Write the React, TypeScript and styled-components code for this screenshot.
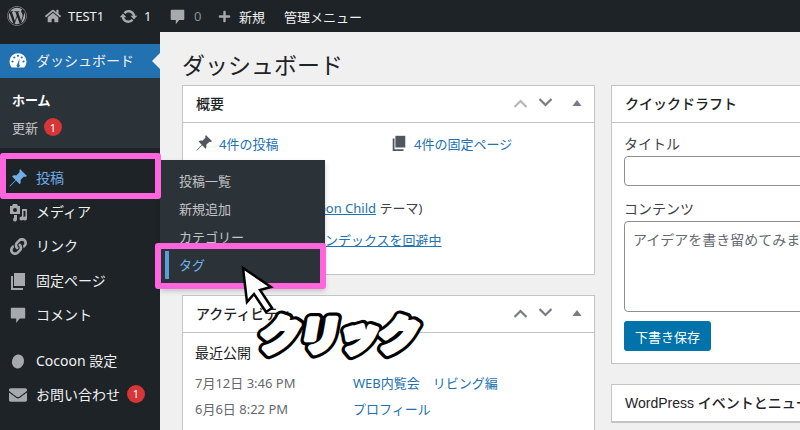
import React from 'react'
import styled, { createGlobalStyle } from 'styled-components'
import { FaWordpress, FaHome, FaPlus, FaLink, FaEnvelope } from 'react-icons/fa'

const Global = createGlobalStyle`
  html, body { margin: 0; padding: 0; background: #f0f0f1; }
  body { font-family: "Noto Sans", "Noto Sans CJK JP", sans-serif; }
  * { box-sizing: border-box; }
`

const Page = styled.div`
  position: relative;
  width: 800px;
  height: 430px;
  overflow: hidden;
`

const TopBar = styled.div`
  height: 32px;
  background: #1d2327;
  display: flex;
  align-items: center;
  color: #f0f0f1;
  font-size: 13px;
`

const BarItem = styled.div<{ $w: number; $gap?: number; $dim?: boolean }>`
  display: flex;
  align-items: center;
  width: ${p => p.$w}px;
  gap: ${p => p.$gap ?? 8}px;
  color: ${p => (p.$dim ? '#8c8f94' : '#f0f0f1')};
  svg { color: #a7aaad; flex: none; }
`

const Body = styled.div`
  display: grid;
  grid-template-columns: 160px 1fr;
  height: 398px;
`

const Sidebar = styled.div`
  background: #1d2327;
  padding-top: 12px;
  color: #f0f0f1;
  font-size: 14px;
`

const MenuItem = styled.div<{ $active?: boolean; $current?: boolean }>`
  position: relative;
  height: 34.4px;
  display: flex;
  align-items: center;
  gap: 8px;
  padding-left: 8px;
  background: ${p => (p.$current ? '#2271b1' : 'transparent')};
  color: ${p => (p.$active ? '#72aee6' : '#f0f0f1')};
  svg { flex: none; color: ${p => (p.$current ? '#fff' : p.$active ? '#72aee6' : '#a7aaad')}; }
`

const IconSlot = styled.span`
  width: 20px;
  height: 20px;
  display: flex;
  align-items: center;
  justify-content: center;
`

const Label = styled.span`
  position: relative;
  top: -1px;
  display: flex;
  align-items: center;
  gap: 7px;
`

const Notch = styled.span`
  position: absolute;
  right: 0;
  top: 9px;
  border: 8px solid transparent;
  border-right-color: #f0f0f1;
  border-left-width: 0;
`

const SubMenu = styled.div`
  background: #2c3338;
  height: 70px;
  padding-top: 7px;
  margin-bottom: 12px;
`

const SubItem = styled.div<{ $bold?: boolean }>`
  height: 28px;
  padding-left: 12px;
  display: flex;
  align-items: center;
  gap: 6px;
  font-size: 13px;
  font-weight: ${p => (p.$bold ? 700 : 400)};
  color: ${p => (p.$bold ? '#fff' : '#c3c4c7')};
`

const Badge = styled.span`
  width: 18px;
  height: 18px;
  border-radius: 50%;
  background: #d63638;
  color: #fff;
  font-size: 11px;
  display: inline-flex;
  align-items: center;
  justify-content: center;
`

const MenuGap = styled.div`
  height: 11px;
`

const Flyout = styled.div`
  position: absolute;
  left: 160px;
  top: 0;
  width: 165px;
  height: 128px;
  padding-top: 6px;
  background: #2c3338;
  box-shadow: 0 3px 5px rgba(0, 0, 0, 0.2);
  z-index: 2;
`

const FlyItem = styled.div<{ $on?: boolean }>`
  height: 28px;
  display: flex;
  align-items: center;
  padding-left: 19px;
  font-size: 13px;
  color: ${p => (p.$on ? '#72aee6' : '#c3c4c7')};
`

const Main = styled.div`
  padding: 20px 0 0 22px;
  overflow: hidden;
`

const Title = styled.h1`
  margin: 0 0 7px;
  font-size: 23px;
  line-height: 26px;
  font-weight: 400;
  color: #1d2327;
  height: 26px;
`

const Columns = styled.div`
  display: grid;
  grid-template-columns: 413px 413px;
  column-gap: 16px;
  align-items: start;
`

const Stack = styled.div`
  display: flex;
  flex-direction: column;
  gap: 20px;
`

const Panel = styled.div<{ $h?: number }>`
  background: #fff;
  border: 1px solid #c3c4c7;
  height: ${p => (p.$h ? `${p.$h}px` : 'auto')};
`

const PanelHead = styled.div`
  height: 37px;
  padding: 0 11px 2px 13px;
  border-bottom: 1px solid #c3c4c7;
  display: flex;
  align-items: center;
  justify-content: space-between;
  font-family: "Liberation Sans", "Noto Sans CJK JP", sans-serif;
  font-size: 14px;
  font-weight: 500;
  color: #1d2327;
  white-space: nowrap;
`

const Handles = styled.div`
  display: flex;
  align-items: center;
  gap: 10px;
`

const ChevronMark = styled.svg<{ $dim?: boolean }>`
  color: ${p => (p.$dim ? '#b5b7ba' : '#787c82')};
`

const Triangle = styled.svg`
  color: #787c82;
  margin-left: 8px;
`

const PanelBody = styled.div`
  padding: 9px 12px;
  font-size: 13px;
  color: #3c434a;
`

const GlanceRow = styled.div`
  display: grid;
  grid-template-columns: 195px 1fr;
  height: 22px;
  align-items: center;
`

const Glance = styled.div`
  display: flex;
  align-items: center;
  gap: 6px;
  color: #2271b1;
  svg { color: #50575e; }
`

const ThemeLine = styled.div`
  margin: 44px 0 0 6px;
  height: 20px;
  white-space: nowrap;
`

const SeoLine = styled.div`
  margin: 12px 0 0 39px;
  height: 20px;
  white-space: nowrap;
`

const Link = styled.a`
  color: #2271b1;
  text-decoration: underline;
`

const SectionLabel = styled.div`
  font-size: 14px;
  color: #1d2327;
  margin: 0 0 7px;
  height: 20px;
`

const ActivityRow = styled.div`
  display: grid;
  grid-template-columns: 158px 1fr;
  height: 26px;
  align-items: center;
`

const Stamp = styled.span`
  color: #646970;
`

const Plain = styled.span`
  color: #2271b1;
  white-space: nowrap;
`

const QuickBody = styled.div`
  padding: 10px 12px;
`

const FieldLabel = styled.div`
  font-size: 14px;
  color: #3c434a;
  height: 23px;
`

const Input = styled.div`
  height: 30px;
  border: 1px solid #8c8f94;
  border-radius: 4px;
  margin-bottom: 12px;
`

const Textarea = styled.div`
  height: 91px;
  border: 1px solid #8c8f94;
  border-radius: 4px;
  padding: 7px 8px;
  font-size: 14px;
  color: #646970;
  white-space: nowrap;
  overflow: hidden;
  margin-bottom: 9px;
`

const SaveButton = styled.div`
  width: 87px;
  height: 30px;
  background: #0073aa;
  border-radius: 3px;
  color: #fff;
  font-size: 13px;
  display: flex;
  align-items: center;
  justify-content: center;
`

const PinkBox = styled.div<{ $x: number; $y: number; $w: number; $h: number }>`
  position: absolute;
  left: ${p => p.$x}px;
  top: ${p => p.$y}px;
  width: ${p => p.$w}px;
  height: ${p => p.$h}px;
  border: 6px solid #ff66dd;
  border-radius: 3px;
  z-index: 3;
`

const ActiveBar = styled.div`
  position: absolute;
  left: 165px;
  top: 251px;
  width: 4px;
  height: 28px;
  background: #5b9dd9;
  z-index: 3;
`

const Cursor = styled.svg`
  position: absolute;
  left: 240px;
  top: 264px;
  z-index: 4;
`

const ClickMark = styled.svg`
  position: absolute;
  left: 245px;
  top: 301px;
  overflow: visible;
  transform: skewX(-10deg);
  z-index: 4;
  text {
    font-family: "Noto Sans CJK JP", sans-serif;
    font-size: 40px;
    font-weight: 900;
    letter-spacing: -0.5px;
    fill: #fff;
  }
`

const Chevron = ({ up, dim }: { up?: boolean; dim?: boolean }) => (
  <ChevronMark $dim={dim} width="15" height="10" viewBox="0 0 15 10">
    <path d={up ? 'M1.500 9l6-6 6 6' : 'M1.500 1l6 6 6-6'} fill="none" stroke="currentColor" strokeWidth="2.200" />
  </ChevronMark>
)

const Handle = ({ dimUp }: { dimUp?: boolean }) => (
  <Handles>
    <Chevron up dim={dimUp} />
    <Chevron />
    <Triangle width="12" height="10" viewBox="0 0 12 10">
      <path d="M6 2l4.500 6h-9z" fill="currentColor" />
    </Triangle>
  </Handles>
)

const SyncIcon = () => (
  <svg width="19" height="19" viewBox="0 0 20 20" fill="currentColor">
    <path d="M10.200 3.280c3.530 0 6.430 2.610 6.920 6h2.080l-3.500 4-3.500-4h2.320c-.450-1.970-2.210-3.450-4.320-3.450-1.450 0-2.730.710-3.540 1.780L4.950 5.660C6.230 4.200 8.110 3.280 10.200 3.280zM9.800 16.720c-3.520 0-6.430-2.610-6.920-6H.8l3.500-4c1.170 1.330 2.330 2.670 3.500 4H5.480c.450 1.970 2.210 3.440 4.320 3.440 1.450 0 2.730-.700 3.540-1.770l1.710 1.950c-1.280 1.460-3.150 2.380-5.250 2.380z" />
  </svg>
)

const GaugeIcon = () => (
  <svg width="20" height="20" viewBox="0 0 20 20">
    <path d="M3.800 16.500A8.500 8.500 0 1 1 16.200 16.500z" fill="currentColor" />
    <g fill="#2271b1">
      <circle cx="4.500" cy="10.500" r="1.100" />
      <circle cx="6.300" cy="6.500" r="1.100" />
      <circle cx="10" cy="4.800" r="1.100" />
      <circle cx="13.700" cy="6.500" r="1.100" />
      <circle cx="15.500" cy="10.500" r="1.100" />
      <path d="M11.500 7.500l-.3 6a1.600 1.600 0 1 1-2 0z" />
    </g>
  </svg>
)

const PinIcon = ({ size = 20 }: { size?: number }) => (
  <svg width={size} height={size} viewBox="0 0 20 20" fill="currentColor">
    <path d="M12 1l7 7-2 1-1-.5-3.500 3.500c.5 2 .2 3.300-.8 4.300L8 12.500 2 18.500l-.5-.5L7.500 12 4 8.300c1-1 2.300-1.300 4.300-.8L11.800 4 11.300 3z" />
  </svg>
)

const MediaIcon = () => (
  <svg width="20" height="20" viewBox="0 0 20 20" fill="currentColor">
    <path d="M2 4h2l1-2h4l1 2h2v8H2z" />
    <circle cx="7" cy="8" r="2" fill="#1d2327" />
    <path d="M14 7h5v9.500a2 2 0 1 1-1.500-1.900V9H15.500v7.500a2 2 0 1 1-1.500-1.900z" />
    <path d="M6 13h3v4.500a2 2 0 1 1-3-1.700z" />
  </svg>
)

const PagesIcon = ({ size = 20 }: { size?: number }) => (
  <svg width={size} height={size} viewBox="0 0 20 20" fill="currentColor">
    <path d="M6 2h11v13H6z" />
    <path d="M3 5h2v12h10v2H3z" />
  </svg>
)

const CommentIcon = ({ size = 18 }: { size?: number }) => (
  <svg width={size} height={size} viewBox="0 0 20 20" fill="currentColor">
    <path d="M3 2h14a1 1 0 0 1 1 1v10a1 1 0 0 1-1 1h-5l-4 5v-5H3a1 1 0 0 1-1-1V3a1 1 0 0 1 1-1z" />
  </svg>
)

const CocoonIcon = () => (
  <svg width="20" height="20" viewBox="0 0 20 20" fill="currentColor">
    <ellipse cx="10" cy="10.500" rx="6" ry="7" transform="rotate(15 10 10.500)" />
  </svg>
)

const App = () => {
  return (
    <Page>
      <Global />
      <TopBar>
        <BarItem $w={45} style={{ paddingLeft: 7 }}><FaWordpress size={20} /></BarItem>
        <BarItem $w={74} $gap={7}><FaHome size={16} />TEST1</BarItem>
        <BarItem $w={50} $gap={6}><SyncIcon />1</BarItem>
        <BarItem $w={49} $dim><CommentIcon size={17} />0</BarItem>
        <BarItem $w={66}><FaPlus size={13} />新規</BarItem>
        <BarItem $w={90}>管理メニュー</BarItem>
      </TopBar>
      <Body>
        <Sidebar>
          <MenuItem $current>
            <IconSlot><GaugeIcon /></IconSlot><Label>ダッシュボード</Label><Notch />
          </MenuItem>
          <SubMenu>
            <SubItem $bold>ホーム</SubItem>
            <SubItem>更新 <Badge>1</Badge></SubItem>
          </SubMenu>
          <MenuItem $active>
            <IconSlot><PinIcon /></IconSlot><Label>投稿</Label>
            <Flyout>
              <FlyItem>投稿一覧</FlyItem>
              <FlyItem>新規追加</FlyItem>
              <FlyItem>カテゴリー</FlyItem>
              <FlyItem $on>タグ</FlyItem>
            </Flyout>
          </MenuItem>
          <MenuItem><IconSlot><MediaIcon /></IconSlot><Label>メディア</Label></MenuItem>
          <MenuItem><IconSlot><FaLink size={17} /></IconSlot><Label>リンク</Label></MenuItem>
          <MenuItem><IconSlot><PagesIcon /></IconSlot><Label>固定ページ</Label></MenuItem>
          <MenuItem><IconSlot><CommentIcon /></IconSlot><Label>コメント</Label></MenuItem>
          <MenuGap />
          <MenuItem><IconSlot><CocoonIcon /></IconSlot><Label>Cocoon 設定</Label></MenuItem>
          <MenuItem><IconSlot><FaEnvelope size={18} /></IconSlot><Label>お問い合わせ<Badge>1</Badge></Label></MenuItem>
        </Sidebar>
        <Main>
          <Title>ダッシュボード</Title>
          <Columns>
            <Stack>
              <Panel $h={190}>
                <PanelHead>概要<Handle dimUp /></PanelHead>
                <PanelBody>
                  <GlanceRow>
                    <Glance><PinIcon size={18} />4件の投稿</Glance>
                    <Glance><PagesIcon size={18} />4件の固定ページ</Glance>
                  </GlanceRow>
                  <ThemeLine>WordPress 6.0 (<Link>Cocoon Child</Link> テーマ)</ThemeLine>
                  <SeoLine><Link>検索エンジンインデックスを回避中</Link></SeoLine>
                </PanelBody>
              </Panel>
              <Panel>
                <PanelHead>アクティビティ<Handle /></PanelHead>
                <PanelBody>
                  <SectionLabel>最近公開</SectionLabel>
                  <ActivityRow><Stamp>7月12日 3:46 PM</Stamp><Plain>WEB内覧会　リビング編</Plain></ActivityRow>
                  <ActivityRow><Stamp>6月6日 8:22 PM</Stamp><Plain>プロフィール</Plain></ActivityRow>
                </PanelBody>
              </Panel>
            </Stack>
            <Stack>
              <Panel $h={279}>
                <PanelHead>クイックドラフト</PanelHead>
                <QuickBody>
                  <FieldLabel>タイトル</FieldLabel>
                  <Input />
                  <FieldLabel>コンテンツ</FieldLabel>
                  <Textarea>アイデアを書き留めてみましょう。</Textarea>
                  <SaveButton>下書き保存</SaveButton>
                </QuickBody>
              </Panel>
              <Panel>
                <PanelHead>WordPress イベントとニュース</PanelHead>
              </Panel>
            </Stack>
          </Columns>
        </Main>
      </Body>
      <PinkBox $x={0} $y={153} $w={161} $h={46} />
      <PinkBox $x={155} $y={243} $w={171} $h={46} />
      <ActiveBar />
      <Cursor width="36" height="50" viewBox="0 0 36 50">
        <path d="M3 4l28 19-11 3 12 18-6 4-12-18-7 8z" fill="#fff" stroke="#000" strokeWidth="2.500" strokeLinejoin="miter" />
      </Cursor>
      <ClickMark width="190" height="64" viewBox="0 0 190 64">
        <g stroke="#000" strokeWidth="12" strokeLinejoin="round">
          <text id="click-label" x="16" y="49">クリック</text>
        </g>
        <use href="#click-label" stroke="#fff" strokeWidth="5.500" strokeLinejoin="round" />
      </ClickMark>
    </Page>
  )
}

export default App
